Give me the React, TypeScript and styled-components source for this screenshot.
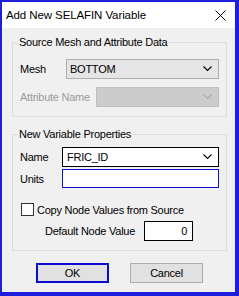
import React from 'react';
import styled, { createGlobalStyle } from 'styled-components';

const Global = createGlobalStyle`
  html, body { margin: 0; padding: 0; background: #ffffff; }
  body { font-family: "Liberation Sans", Arial, sans-serif; }
  * { box-sizing: border-box; }
`;

const Window = styled.div`
  width: 239px;
  height: 296px;
  border-style: solid;
  border-color: #1d1ddc;
  border-width: 2px 4px 4px 2px;
  display: flex;
  flex-direction: column;
  font-family: "Liberation Sans", Arial, sans-serif;
  font-size: 11px;
  letter-spacing: -0.25px;
  color: #000;
`;

const TitleBar = styled.div`
  height: 26px;
  flex: none;
  background: #ffffff;
  display: flex;
  align-items: center;
  justify-content: space-between;
  padding-left: 4px;
`;

const Title = styled.span`
  font-size: 11.5px;
  letter-spacing: -0.1px;
  line-height: 14px;
`;

const CloseButton = styled.div`
  width: 30px;
  height: 26px;
  display: flex;
  align-items: center;
  justify-content: center;
`;

const Body = styled.div`
  flex: 1;
  background: #f0f0f0;
  padding: 7px 8px 0 10px;
  display: flex;
  flex-direction: column;
`;

const Group = styled.fieldset<{ $padTop: number; $gapTop?: number }>`
  margin: ${(p) => p.$gapTop ?? 0}px 0 0 0;
  border: 1px solid #dcdcdc;
  padding: ${(p) => p.$padTop}px 7px 9px 7px;
  min-width: 0;
  display: flex;
  flex-direction: column;
`;

const Legend = styled.legend`
  padding: 0 2px;
  margin-left: -3px;
  line-height: 14px;
  font-size: 11px;
`;

const Row = styled.div<{ $mt?: number; $h?: number }>`
  display: flex;
  align-items: center;
  height: ${(p) => p.$h ?? 20}px;
  margin-top: ${(p) => p.$mt ?? 0}px;
`;

const Label = styled.span<{ $w: number; $disabled?: boolean; $indent?: number }>`
  flex: none;
  width: ${(p) => p.$w}px;
  margin-left: ${(p) => p.$indent ?? 0}px;
  color: ${(p) => (p.$disabled ? '#9a9a9a' : '#000')};
  white-space: nowrap;
`;

type ComboVariant = 'readonly' | 'disabled' | 'editable';

const comboBg: Record<ComboVariant, string> = {
  readonly: '#e5e5e5',
  disabled: '#cccccc',
  editable: '#ffffff',
};
const comboBorder: Record<ComboVariant, string> = {
  readonly: '#adadad',
  disabled: '#bfbfbf',
  editable: '#000000',
};

const ComboBox = styled.div<{ $variant: ComboVariant; $padLeft: number }>`
  flex: 1;
  height: 100%;
  display: flex;
  align-items: center;
  justify-content: space-between;
  background: ${(p) => comboBg[p.$variant]};
  border: 1px solid ${(p) => comboBorder[p.$variant]};
  padding: 0 6px 0 ${(p) => p.$padLeft}px;
`;

const TextBox = styled.div<{ $border: string; $align?: string }>`
  flex: 1;
  height: 100%;
  background: #ffffff;
  border: 1px solid ${(p) => p.$border};
  display: flex;
  align-items: center;
  justify-content: ${(p) => p.$align ?? 'flex-start'};
  padding: 0 5px 0 4px;
`;

const SmallBox = styled(TextBox)`
  flex: none;
  width: 49px;
`;

const CheckBox = styled.div`
  width: 13px;
  height: 13px;
  margin-left: 1px;
  margin-right: 3px;
  border: 1px solid #333333;
  background: #ffffff;
  flex: none;
`;

const ButtonRow = styled.div`
  display: flex;
  justify-content: center;
  gap: 21px;
  margin-top: 12px;
`;

const Button = styled.div<{ $default?: boolean }>`
  width: 73px;
  height: 20px;
  display: flex;
  align-items: center;
  justify-content: center;
  background: #e1e1e1;
  border: ${(p) => (p.$default ? '2px solid #0a0ad0' : '1px solid #adadad')};
`;

const Chevron = ({ color }: { color: string }) => (
  <svg width="9" height="6" viewBox="0 0 9 6">
    <polyline points="0.5,0.5 4.5,4.5 8.5,0.5" fill="none" stroke={color} strokeWidth="1.1" />
  </svg>
);

export default function App() {
  return (
    <>
      <Global />
      <Window>
        <TitleBar>
          <Title>Add New SELAFIN Variable</Title>
          <CloseButton>
            <svg width="11" height="11" viewBox="0 0 11 11">
              <path d="M0.5 0.5 L10.5 10.5 M10.5 0.5 L0.5 10.5" stroke="#000" strokeWidth="1" />
            </svg>
          </CloseButton>
        </TitleBar>
        <Body>
          <Group $padTop={10}>
            <Legend>Source Mesh and Attribute Data</Legend>
            <Row>
              <Label $w={46}>Mesh</Label>
              <ComboBox $variant="readonly" $padLeft={3}>
                <span>BOTTOM</span>
                <Chevron color="#000" />
              </ComboBox>
            </Row>
            <Row $mt={8}>
              <Label $w={76} $disabled>
                Attribute Name
              </Label>
              <ComboBox $variant="disabled" $padLeft={3}>
                <span />
                <Chevron color="#a8a8a8" />
              </ComboBox>
            </Row>
          </Group>
          <Group $padTop={6} $gapTop={10}>
            <Legend>New Variable Properties</Legend>
            <Row>
              <Label $w={42}>Name</Label>
              <ComboBox $variant="editable" $padLeft={4}>
                <span>FRIC_ID</span>
                <Chevron color="#000" />
              </ComboBox>
            </Row>
            <Row $mt={2} $h={19}>
              <Label $w={42}>Units</Label>
              <TextBox $border="#1010d0" />
            </Row>
            <Row $mt={15} $h={13}>
              <CheckBox />
              <span>Copy Node Values from Source</span>
            </Row>
            <Row $mt={5}>
              <Label $w={99} $indent={25}>
                Default Node Value
              </Label>
              <SmallBox $border="#000000" $align="flex-end">
                0
              </SmallBox>
            </Row>
          </Group>
          <ButtonRow>
            <Button $default>OK</Button>
            <Button>Cancel</Button>
          </ButtonRow>
        </Body>
      </Window>
    </>
  );
}
